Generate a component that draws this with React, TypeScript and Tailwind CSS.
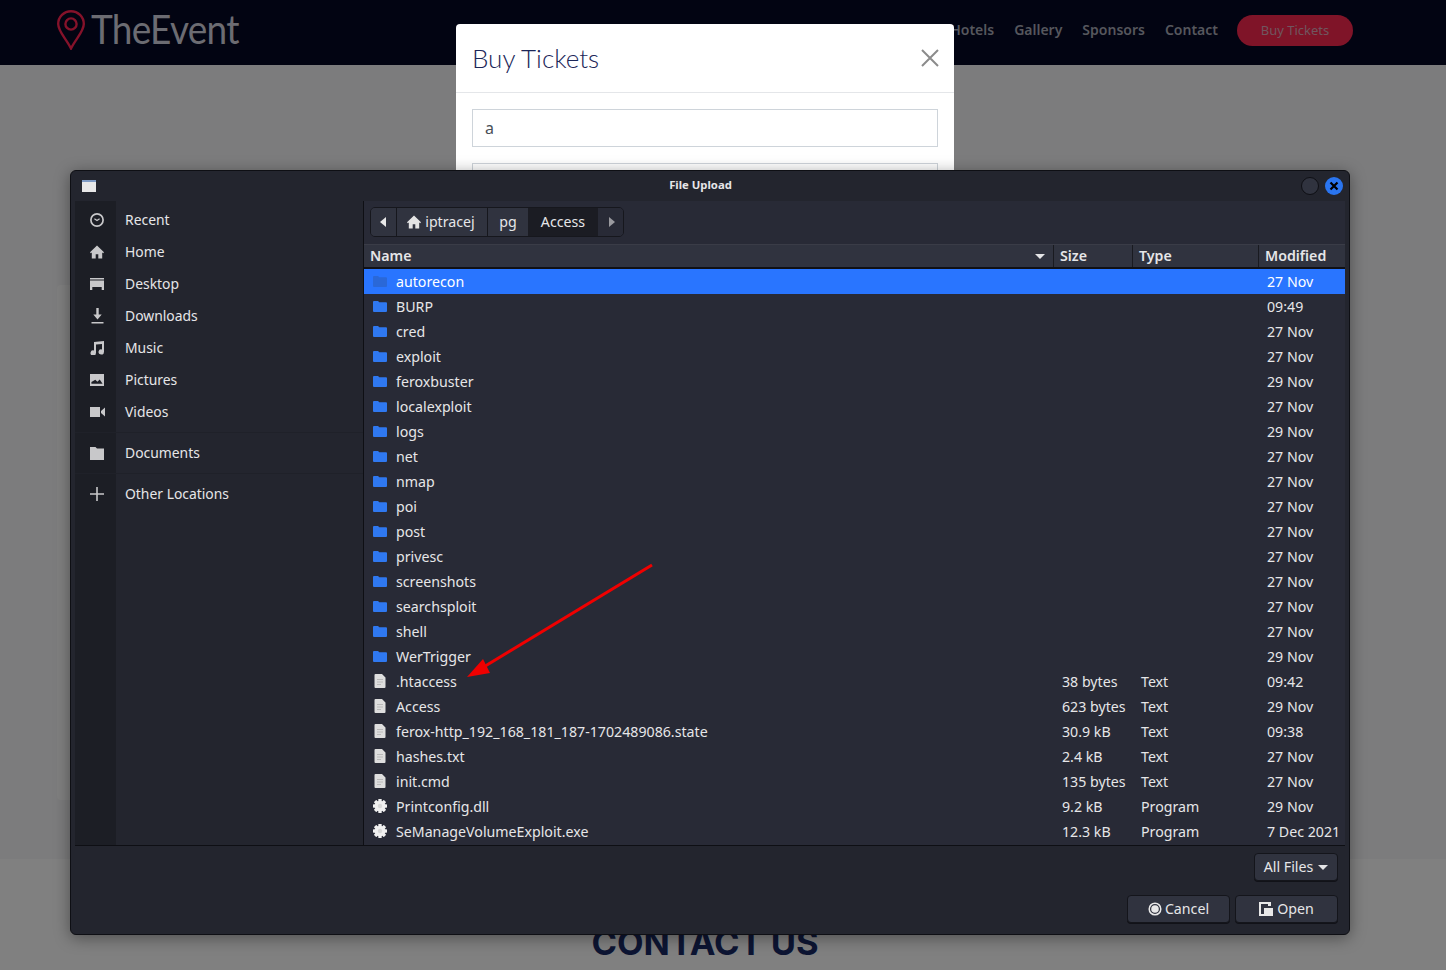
import React from "react";

const sans = "[font-family:'Noto_Sans',sans-serif]";

const folders = ["autorecon","BURP","cred","exploit","feroxbuster","localexploit","logs","net","nmap","poi","post","privesc","screenshots","searchsploit","shell","WerTrigger"];
const folderDates = ["27 Nov","09:49","27 Nov","27 Nov","29 Nov","27 Nov","29 Nov","27 Nov","27 Nov","27 Nov","27 Nov","27 Nov","27 Nov","27 Nov","27 Nov","29 Nov"];
type Row = { name: string; kind: "folder" | "text" | "exe"; size: string; type: string; date: string };
const rows: Row[] = [
  ...folders.map((name, i) => ({ name, kind: "folder" as const, size: "", type: "", date: folderDates[i] })),
  { name: ".htaccess", kind: "text", size: "38 bytes", type: "Text", date: "09:42" },
  { name: "Access", kind: "text", size: "623 bytes", type: "Text", date: "29 Nov" },
  { name: "ferox-http_192_168_181_187-1702489086.state", kind: "text", size: "30.9 kB", type: "Text", date: "09:38" },
  { name: "hashes.txt", kind: "text", size: "2.4 kB", type: "Text", date: "27 Nov" },
  { name: "init.cmd", kind: "text", size: "135 bytes", type: "Text", date: "27 Nov" },
  { name: "Printconfig.dll", kind: "exe", size: "9.2 kB", type: "Program", date: "29 Nov" },
  { name: "SeManageVolumeExploit.exe", kind: "exe", size: "12.3 kB", type: "Program", date: "7 Dec 2021" },
];

const HomeIcon = ({ c = "#e4e4e4" }: { c?: string }) => (
  <svg width="14" height="14" viewBox="0 0 14 14"><path fill={c} d="M7 .5 0 7.300.8 8.200 1.800 7.400V13.500h3.900V9.300h2.600v4.200h3.900V7.400l1 .8.8-.9z" /></svg>
);

function SideIcon({ name }: { name: string }) {
  const c = "#c8c8ca";
  switch (name) {
    case "Recent":
      return <svg width="14" height="14" viewBox="0 0 14 14"><circle cx="7" cy="7" r="6.100" fill="none" stroke={c} strokeWidth="1.700" /><path d="M4.400 5.800 7 7.600 9.600 5.800" fill="none" stroke={c} strokeWidth="1.200" /></svg>;
    case "Home":
      return <HomeIcon c={c} />;
    case "Desktop":
      return <svg width="14" height="12" viewBox="0 0 14 12"><path fill={c} d="M0 0h14v1.500H0zM0 2.500h14V12h-2.300V9H2.300v3H0z" /></svg>;
    case "Downloads":
      return <svg width="13" height="16" viewBox="0 0 13 16"><path fill={c} d="M5.300 0h2.400v6.500h3L6.500 11.500 2.300 6.500h3zM.5 14h12v1.600H.5z" /></svg>;
    case "Music":
      return <svg width="14" height="14" viewBox="0 0 14 14"><path fill={c} d="M4 1 14 0v11h-.1a2.700 2.600 0 1 1-1.900-2.500V3L6 3.600V12h-.1A2.700 2.600 0 1 1 4 9.500z" /></svg>;
    case "Pictures":
      return <svg width="14" height="12" viewBox="0 0 14 12"><path fillRule="evenodd" fill={c} d="M0 0h14v12H0zM1.400 9.800h11.200L9.700 5.500 7.400 7.700 5.300 5.800 1.400 8z" /></svg>;
    case "Videos":
      return <svg width="15" height="10" viewBox="0 0 15 10"><path fill={c} d="M0 0h10v10H0zM11 4l4-3.500v9L11 6z" /></svg>;
    case "Documents":
      return <svg width="14" height="13" viewBox="0 0 14 13"><path fill={c} d="M0 0h5.500l1.500 1.500H14V13H0z" /></svg>;
    default:
      return <svg width="14" height="14" viewBox="0 0 14 14"><path fill={c} d="M6.200 0h1.600v6.200H14v1.600H7.800V14H6.200V7.800H0V6.200h6.200z" /></svg>;
  }
}

function FileIcon({ kind, selected }: { kind: Row["kind"]; selected?: boolean }) {
  if (kind === "folder")
    return <svg width="14" height="11" viewBox="0 0 14 11"><path fill={selected ? "#2a68d8" : "#2f78f0"} d="M0 1a1 1 0 0 1 1-1h4l1.300 1.300H13a1 1 0 0 1 1 1V10a1 1 0 0 1-1 1H1a1 1 0 0 1-1-1z" /></svg>;
  if (kind === "text")
    return <svg width="12" height="14" viewBox="0 0 12 14"><path fill="#dedede" d="M.5 1a1 1 0 0 1 1-1H8l3.500 3.500V13a1 1 0 0 1-1 1h-9a1 1 0 0 1-1-1z" /><path fill="#b9b9b9" d="M3 5h6v1H3zM3 7.500h6v1H3zM3 10h4v1H3z" /></svg>;
  return (
    <svg width="14" height="14" viewBox="0 0 14 14">
      <g fill="#f0f0f0">
        {[0, 45, 90, 135].map((a) => (
          <rect key={a} x="5.300" y="0" width="3.400" height="14" rx=".6" transform={`rotate(${a} 7 7)`} />
        ))}
        <circle cx="7" cy="7" r="5.300" />
      </g>
      <circle cx="7" cy="7" r="2.200" fill="#d8d8d8" />
    </svg>
  );
}

const Caret = () => (
  <svg width="10" height="5" viewBox="0 0 10 5"><path fill="#e4e4e6" d="M0 0h10L5 5z" /></svg>
);

const btn = "flex items-center justify-center rounded-[4px] border border-[#14151b] bg-[#30333f] shadow-[0_1px_0_#111218] text-[#e6e6e8]";

function SideItem({ name }: { name: string }) {
  return (
    <div className="flex h-8 items-center">
      <div className="flex w-[41px] justify-center pl-[3px]"><SideIcon name={name} /></div>
      <span className="ml-[9px] text-[13.900px]">{name}</span>
    </div>
  );
}

const SideSep = () => <div className="my-[4px] h-px bg-[#1f2129]" />;

export default function App() {
  return (
    <div className={`relative h-[970px] w-[1446px] overflow-hidden bg-[#808080] ${sans}`}>
      {/* Page behind the backdrop */}
      <header className="flex h-[65px] items-center bg-[#020412] pb-[4px] pl-[57px] pr-[93px]">
        <svg width="28" height="40" viewBox="0 0 28 40" className="mb-[1px]">
          <path d="M14 38.500 C9 28.500 1.200 21.500 1.200 14 A12.800 12.800 0 0 1 26.800 14 C26.800 21.500 19 28.500 14 38.500Z" fill="none" stroke="#85122a" strokeWidth="2.400" />
          <circle cx="14" cy="14" r="5.600" fill="none" stroke="#85122a" strokeWidth="2.400" />
        </svg>
        <span className="mb-[4px] ml-[6px] scale-y-[1.1] text-[37px] leading-none tracking-[-0.7px] text-[#6c6c72] [font-family:Lato,sans-serif]">TheEvent</span>
        <nav className="ml-auto flex items-center gap-5 text-[14px] font-semibold text-[#56575d]">
          <span className="pb-[2px]">Hotels</span>
          <span className="pb-[2px]">Gallery</span>
          <span className="pb-[2px]">Sponsors</span>
          <span className="pb-[2px]">Contact</span>
          <span className="-ml-px flex h-[31px] w-[116px] items-center justify-center rounded-full bg-[#7f1428] text-[13px] font-normal text-[#70565f]">Buy Tickets</span>
        </nav>
      </header>
      <main className="h-[794px] bg-[#7c7c7d] pl-[57px] pt-[220px]">
        <div className="h-[515px] w-[300px] rounded-[4px] bg-[#808080]" />
      </main>
      <h2 className="absolute left-0 top-[922px] w-[1410px] text-center text-[34.500px] font-bold leading-[42px] text-[#0d1533] [font-family:Inter,sans-serif]">CONTACT US</h2>

      {/* Bootstrap modal */}
      <div className="absolute left-[456px] top-[24px] h-[400px] w-[498px] rounded-[4px] bg-white">
        <div className="flex h-[69px] items-center justify-between border-b border-[#e4e6e9] pl-4 pr-[15px]">
          <span className="text-[26px] font-light text-[#1b2658] [font-family:Lato,sans-serif]">Buy Tickets</span>
          <svg width="18" height="18" viewBox="0 0 18 18"><path d="M1 1l16 16M17 1 1 17" stroke="#8b8b8b" strokeWidth="2" /></svg>
        </div>
        <div className="px-4 pt-4">
          <div className="flex h-[38px] items-center border border-[#ced4da] pl-3 text-[16px] text-[#495057]">a</div>
          <div className="mt-4 h-[38px] border border-[#ced4da]" />
        </div>
      </div>

      {/* GTK file chooser */}
      <div className="absolute left-[70px] top-[170px] flex h-[765px] w-[1280px] flex-col rounded-[6px] border border-[#0e0f14] bg-[#23252e] text-[14.200px] leading-[20px] text-[#e6e6e8] shadow-[0_3px_16px_rgba(0,0,0,0.4)]">
        <div className="relative flex h-[30px] shrink-0 items-center justify-center pb-[2px] pr-[19px] text-[11.300px] font-bold">
          <svg width="14" height="12" viewBox="0 0 14 12" className="absolute left-[11px] top-[9px]"><path fill="#e8e8e8" d="M0 0h14v12H0z" /><path fill="#7f9bc4" d="M0 0h14v2H0z" /></svg>
          File Upload
          <span className="absolute right-[30px] top-[6px] h-[18px] w-[18px] rounded-full border border-[#0e0f14] bg-[#30333f]" />
          <span className="absolute right-[6px] top-[6px] flex h-[18px] w-[18px] items-center justify-center rounded-full bg-[#2a75f0]">
            <svg width="10" height="10" viewBox="0 0 10 10"><path d="M1.500 1.500l7 7M8.500 1.500l-7 7" stroke="#000" strokeWidth="2.200" /></svg>
          </span>
        </div>
        <div className="mx-[4px] flex min-h-0 flex-1 border-b border-[#0e0f14]">
          <aside className="relative w-[289px] shrink-0 border-r border-[#0e0f14] bg-[linear-gradient(to_right,#1c1e25_41px,#23252e_41px)] pt-[3px]">
            {["Recent","Home","Desktop","Downloads","Music","Pictures","Videos"].map((n) => <SideItem key={n} name={n} />)}
            <SideSep />
            <SideItem name="Documents" />
            <SideSep />
            <SideItem name="Other Locations" />
          </aside>
          <section className="flex min-w-0 flex-1 flex-col bg-[#282a36]">
            <div className="flex h-[43px] shrink-0 items-start pl-[6px] pt-[6px]">
              <div className="flex h-[30px] items-stretch overflow-hidden rounded-[5px] border border-[#16171d]">
                <div className="flex w-[26px] items-center justify-center border-r border-[#16171d] bg-[#30333f] pr-[2px]">
                  <svg width="6" height="10" viewBox="0 0 6 10"><path fill="#e8e8e8" d="M6 0v10L0 5z" /></svg>
                </div>
                <div className="flex w-[91px] items-center justify-center gap-[4px] border-r border-[#16171d] bg-[#30333f] pr-[2px]"><HomeIcon /><span>iptracej</span></div>
                <div className="flex w-[40px] items-center justify-center bg-[#30333f]">pg</div>
                <div className="flex w-[70px] items-center justify-center bg-[#1b1c23]">Access</div>
                <div className="flex w-[25px] items-center justify-center bg-[#282a36] pl-[2px]">
                  <svg width="6" height="10" viewBox="0 0 6 10"><path fill="#9a9a9f" d="M0 0v10l6-5z" /></svg>
                </div>
              </div>
            </div>
            <div className="flex h-[25px] shrink-0 border-t border-b-2 border-t-[#3a3c47] border-b-[#101116] bg-[#30333f] font-semibold text-[#e6e6e8]">
              <div className="flex w-[690px] items-center justify-between border-r border-[#191a20] pl-[6px] pr-[8px]"><span>Name</span><Caret /></div>
              <div className="flex w-[79px] items-center border-r border-[#191a20] pl-[6px]">Size</div>
              <div className="flex w-[126px] items-center border-r border-[#191a20] pl-[6px]">Type</div>
              <div className="flex flex-1 items-center pl-[6px]">Modified</div>
            </div>
            <div className="flex flex-col">
              {rows.map((r, i) => (
                <div key={r.name} className={`flex h-[25px] items-center ${i === 0 ? "bg-[#2975ff] text-white" : ""}`}>
                  <div className="flex w-[690px] items-center">
                    <div className={`flex w-[32px] justify-center ${r.kind === "folder" ? "" : "mb-[1px]"}`}><FileIcon kind={r.kind} selected={i === 0} /></div>
                    <span>{r.name}</span>
                  </div>
                  <div className="w-[79px] pl-[8px]">{r.size}</div>
                  <div className="w-[126px] pl-[8px]">{r.type}</div>
                  <div className="pl-[8px]">{r.date}</div>
                </div>
              ))}
            </div>
          </section>
        </div>
        <div className="flex h-[88px] shrink-0 flex-col items-end pr-[11px] pt-[7px]">
          <div className={`${btn} h-[28px] w-[84px] gap-[5px]`}><span>All Files</span> <Caret /></div>
          <div className="mt-[14px] flex gap-[5px]">
            <div className={`${btn} h-[28px] w-[103px] gap-[3px]`}>
              <svg width="14" height="14" viewBox="0 0 14 14"><circle cx="7" cy="7" r="5.800" fill="none" stroke="#e8e8e8" strokeWidth="1.500" /><circle cx="7" cy="7" r="3.800" fill="#e8e8e8" /></svg>
              <span>Cancel</span>
            </div>
            <div className={`${btn} h-[28px] w-[103px] gap-[4px]`}>
              <svg width="14" height="14" viewBox="0 0 14 14"><path fill="#e8e8e8" d="M0 0h12v4H9V2H2v12H0zM5 6h9v8H5z" /><path fill="#e8e8e8" d="M2 12h3v2H2z" /></svg>
              <span>Open</span>
            </div>
          </div>
        </div>
      </div>

      {/* Red annotation arrow */}
      <svg width="1446" height="970" viewBox="0 0 1446 970" className="pointer-events-none absolute left-0 top-0">
        <path d="M652 565 482 668" stroke="#f00000" strokeWidth="3" fill="none" />
        <path d="M467 677 483 659 490 673z" fill="#f00000" />
      </svg>
    </div>
  );
}
